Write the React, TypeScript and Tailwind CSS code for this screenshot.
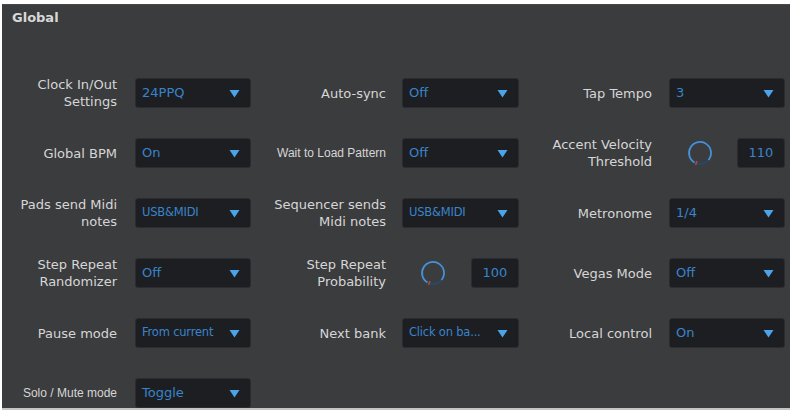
import React from 'react';

type Cell =
  | { label: string[]; small?: boolean; kind: 'select'; value: string; condensed?: boolean }
  | { label: string[]; small?: boolean; kind: 'knob'; value: string }
  | null;

const rows: Cell[][] = [
  [
    { label: ['Clock In/Out', 'Settings'], kind: 'select', value: '24PPQ' },
    { label: ['Auto-sync'], kind: 'select', value: 'Off' },
    { label: ['Tap Tempo'], kind: 'select', value: '3' },
  ],
  [
    { label: ['Global BPM'], kind: 'select', value: 'On' },
    { label: ['Wait to Load Pattern'], small: true, kind: 'select', value: 'Off' },
    { label: ['Accent Velocity', 'Threshold'], kind: 'knob', value: '110' },
  ],
  [
    { label: ['Pads send Midi', 'notes'], kind: 'select', value: 'USB&MIDI', condensed: true },
    { label: ['Sequencer sends', 'Midi notes'], kind: 'select', value: 'USB&MIDI', condensed: true },
    { label: ['Metronome'], kind: 'select', value: '1/4' },
  ],
  [
    { label: ['Step Repeat', 'Randomizer'], kind: 'select', value: 'Off' },
    { label: ['Step Repeat', 'Probability'], kind: 'knob', value: '100' },
    { label: ['Vegas Mode'], kind: 'select', value: 'Off' },
  ],
  [
    { label: ['Pause mode'], kind: 'select', value: 'From current', condensed: true },
    { label: ['Next bank'], kind: 'select', value: 'Click on ba...', condensed: true },
    { label: ['Local control'], kind: 'select', value: 'On' },
  ],
  [{ label: ['Solo / Mute mode'], small: true, kind: 'select', value: 'Toggle' }, null, null],
];

const labelPad = ['pr-[18px]', 'pr-[16px]', 'pr-[17px]'];

const Arrow = () => (
  <svg width="11" height="9" viewBox="0 0 11 9" className="shrink-0">
    <path d="M0.5 1 L10.5 1 L5.5 8.5 Z" fill="#4ba3ea" />
  </svg>
);

// ring knob, arc runs clockwise from about 7 o'clock
const Knob = () => (
  <svg width="28" height="28" viewBox="0 0 28 28" className="shrink-0">
    <circle cx="14" cy="14" r="11" fill="none" stroke="#2b4768" strokeWidth="1.8" />
    <path d="M8.5 23.5 A11 11 0 1 1 22.5 21" fill="none" stroke="#4a8fd2" strokeWidth="1.8" />
    <line x1="11" y1="22" x2="9.5" y2="26" stroke="#b5483c" strokeWidth="1.5" />
  </svg>
);

const Select = ({ value, condensed }: { value: string; condensed?: boolean }) => (
  <div className="h-[30px] flex items-center justify-between pl-[6px] pr-[10px] bg-[#1d1e21] border border-[#2b2c2f] rounded-[3px]">
    <span
      className={
        condensed
          ? 'text-[11.5px] text-[#3a84cc] tracking-[-0.2px] whitespace-nowrap'
          : 'text-[13px] text-[#3a84cc] whitespace-nowrap'
      }
    >
      {value}
    </span>
    <Arrow />
  </div>
);

const KnobControl = ({ value }: { value: string }) => (
  <div className="h-[30px] flex items-center pl-[17px]">
    <Knob />
    <div className="ml-auto w-[48px] h-[30px] flex items-center justify-center bg-[#1d1e21] border border-[#2b2c2f] rounded-[3px] text-[13px] text-[#3a84cc]">
      {value}
    </div>
  </div>
);

export default function App() {
  return (
    <div className="w-[790px] h-[412px] bg-white pt-[4px] pl-[2px] overflow-hidden">
      <div className="h-[406px] bg-[#3b3c3e] border-t border-[#47484a] font-['DejaVu_Sans',sans-serif]">
        <div className="pl-[10px] pt-[5px] text-[13px] font-bold text-[#d8d8d8] leading-[16px]">Global</div>
        <div className="mt-[52px] grid grid-cols-[133px_116px_151px_117px_150px_116px] auto-rows-[30px] gap-y-[30px]">
          {rows.map((row, ri) =>
            row.map((cell, ci) => {
              if (!cell) {
                return (
                  <React.Fragment key={`${ri}-${ci}`}>
                    <div />
                    <div />
                  </React.Fragment>
                );
              }
              return (
                <React.Fragment key={`${ri}-${ci}`}>
                  <div
                    className={`flex flex-col items-end justify-center text-right text-[#d6d6d6] whitespace-nowrap ${labelPad[ci]} ${
                      cell.small
                        ? "text-[12px] font-['Liberation_Sans',sans-serif]"
                        : 'text-[13px] leading-[17px]'
                    }`}
                  >
                    {cell.label.map((l) => (
                      <span key={l}>{l}</span>
                    ))}
                  </div>
                  {cell.kind === 'select' ? (
                    <Select value={cell.value} condensed={'condensed' in cell ? cell.condensed : false} />
                  ) : (
                    <KnobControl value={cell.value} />
                  )}
                </React.Fragment>
              );
            })
          )}
        </div>
      </div>
      <div className="h-[2px] bg-[#c4c4c4] -mt-[2px] relative" />
    </div>
  );
}
